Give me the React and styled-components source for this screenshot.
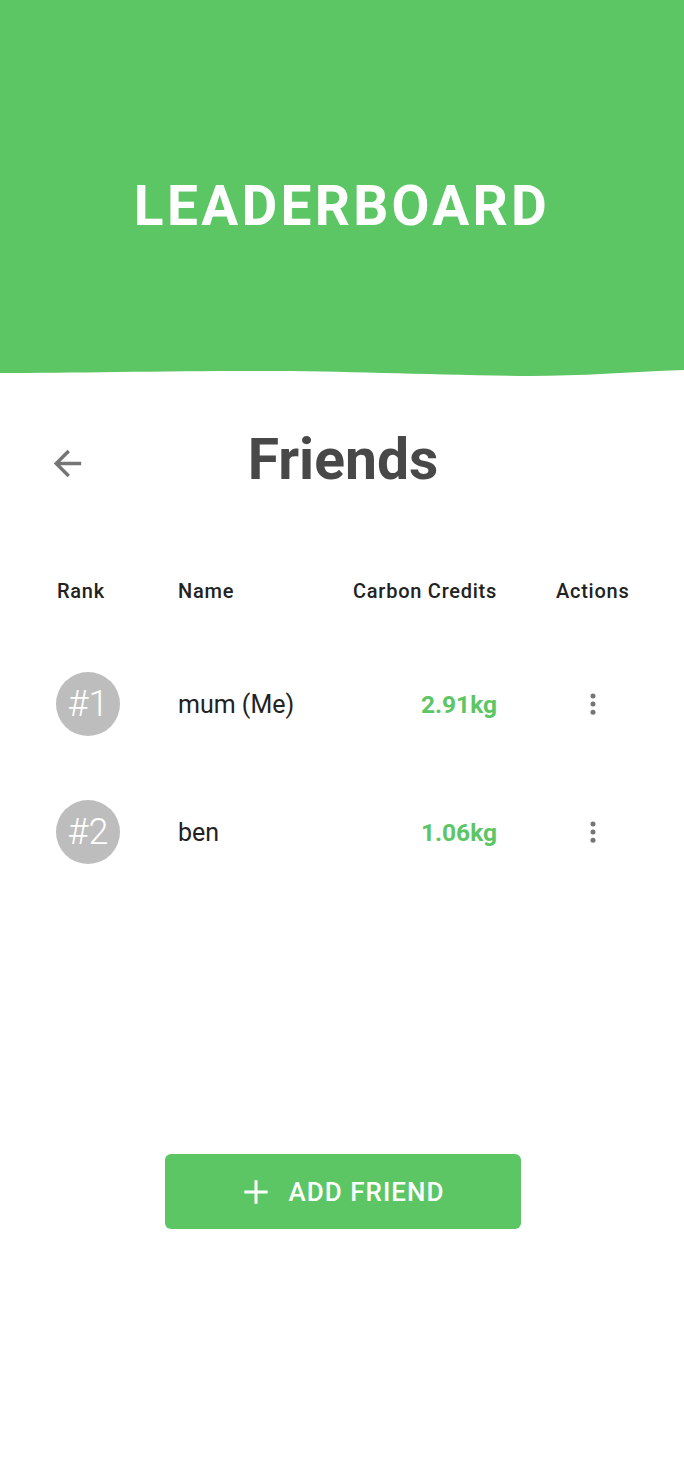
import React from 'react'
import styled, { createGlobalStyle } from 'styled-components'

const GREEN = '#5cc564'

const GlobalStyle = createGlobalStyle`
  html, body {
    margin: 0;
    padding: 0;
    background: #fff;
    font-family: Roboto, "Liberation Sans", sans-serif;
  }
`

const Page = styled.div`
  width: 684px;
  min-height: 1478px;
  display: flex;
  flex-direction: column;
`

const Banner = styled.header`
  height: 368px;
  background: ${GREEN};
  display: flex;
  align-items: center;
  justify-content: center;
  padding-top: 44px;
  box-sizing: border-box;
`

const BannerTitle = styled.h1`
  margin: 0;
  color: #fff;
  font-family: Roboto, sans-serif;
  font-weight: 700;
  font-size: 55px;
  letter-spacing: 3.3px;
`

const Wave = styled.svg`
  display: block;
  width: 100%;
  height: 10px;
`

const TitleRow = styled.div`
  display: grid;
  grid-template-columns: 1fr auto 1fr;
  align-items: center;
  margin-top: 48px;
`

const BackButton = styled.button`
  justify-self: start;
  margin-left: 47px;
  padding: 0;
  border: 0;
  background: none;
  display: flex;
  color: #757575;
  margin-top: 6px;
`

const Title = styled.h2`
  margin: 0 0 0 2px;
  font-size: 57px;
  font-weight: 700;
  color: #484848;
  line-height: 68px;
`

const Table = styled.div`
  margin: 77px 0 0 57px;
`

const Row = styled.div`
  display: grid;
  grid-template-columns: 121px 175px 144px 132px;
  align-items: center;
  height: ${p => (p.$head ? '40px' : '128px')};
  margin-bottom: ${p => (p.$head ? '29px' : '0')};
`

const HeadCell = styled.div`
  font-size: 20px;
  font-weight: 500;
  letter-spacing: 0.75px;
  color: #222;
  white-space: nowrap;
  text-align: ${p => p.$align || 'left'};
  padding-left: ${p => p.$pad || 0};
`

const Badge = styled.div`
  width: 64px;
  height: 64px;
  border-radius: 50%;
  background: #bdbdbd;
  color: #fff;
  font-size: 36px;
  font-weight: 300;
  display: flex;
  align-items: center;
  justify-content: center;
  margin-left: -1px;
`

const Name = styled.div`
  font-size: 25px;
  color: #222;
`

const Credits = styled.div`
  font-size: 24.5px;
  font-weight: 700;
  color: ${GREEN};
  text-align: right;
`

const Kebab = styled.div`
  padding-left: 59px;
  width: 73px;
  display: flex;
  justify-content: center;
  color: #757575;
`

const Footer = styled.div`
  display: flex;
  justify-content: center;
  margin-top: 258px;
  padding-left: 2px;
`

const AddButton = styled.button`
  width: 356px;
  height: 75px;
  border: 0;
  border-radius: 6px;
  background: ${GREEN};
  color: #fff;
  font-family: Roboto, sans-serif;
  font-size: 26px;
  font-weight: 500;
  letter-spacing: 1px;
  display: flex;
  align-items: center;
  justify-content: center;
  gap: 13px;
  padding-right: 12px;
`

const ArrowBack = () => (
  <svg width="41" height="41" viewBox="0 0 24 24" fill="currentColor">
    <path d="M20 11H7.83l5.59-5.59L12 4l-8 8 8 8 1.41-1.41L7.83 13H20v-2z" />
  </svg>
)

const MoreVert = () => (
  <svg width="30" height="30" viewBox="0 0 24 24" fill="currentColor">
    <circle cx="12" cy="5.5" r="2" />
    <circle cx="12" cy="12" r="2" />
    <circle cx="12" cy="18.5" r="2" />
  </svg>
)

const Plus = () => (
  <svg width="40" height="40" viewBox="0 0 24 24" fill="currentColor">
    <path d="M19 12.9h-6.1V19h-1.8v-6.1H5v-1.8h6.1V5h1.8v6.1H19z" />
  </svg>
)

const friends = [
  { rank: 1, name: 'mum (Me)', credits: '2.91kg' },
  { rank: 2, name: 'ben', credits: '1.06kg' },
]

export default function App() {
  return (
    <Page>
      <GlobalStyle />
      <Banner>
        <BannerTitle>LEADERBOARD</BannerTitle>
      </Banner>
      <Wave viewBox="0 0 684 10" preserveAspectRatio="none">
        <path
          fill={GREEN}
          d="M0 0H684V2C630 4 580 8 530 8C430 7 350 3 260 3C160 3 70 5 0 5Z"
        />
      </Wave>

      <TitleRow>
        <BackButton aria-label="back">
          <ArrowBack />
        </BackButton>
        <Title>Friends</Title>
        <div />
      </TitleRow>

      <Table>
        <Row $head>
          <HeadCell>Rank</HeadCell>
          <HeadCell>Name</HeadCell>
          <HeadCell $align="right">Carbon Credits</HeadCell>
          <HeadCell $pad="59px">Actions</HeadCell>
        </Row>
        {friends.map(f => (
          <Row key={f.rank}>
            <Badge>#{f.rank}</Badge>
            <Name>{f.name}</Name>
            <Credits>{f.credits}</Credits>
            <Kebab>
              <MoreVert />
            </Kebab>
          </Row>
        ))}
      </Table>

      <Footer>
        <AddButton>
          <Plus />
          ADD FRIEND
        </AddButton>
      </Footer>
    </Page>
  )
}
